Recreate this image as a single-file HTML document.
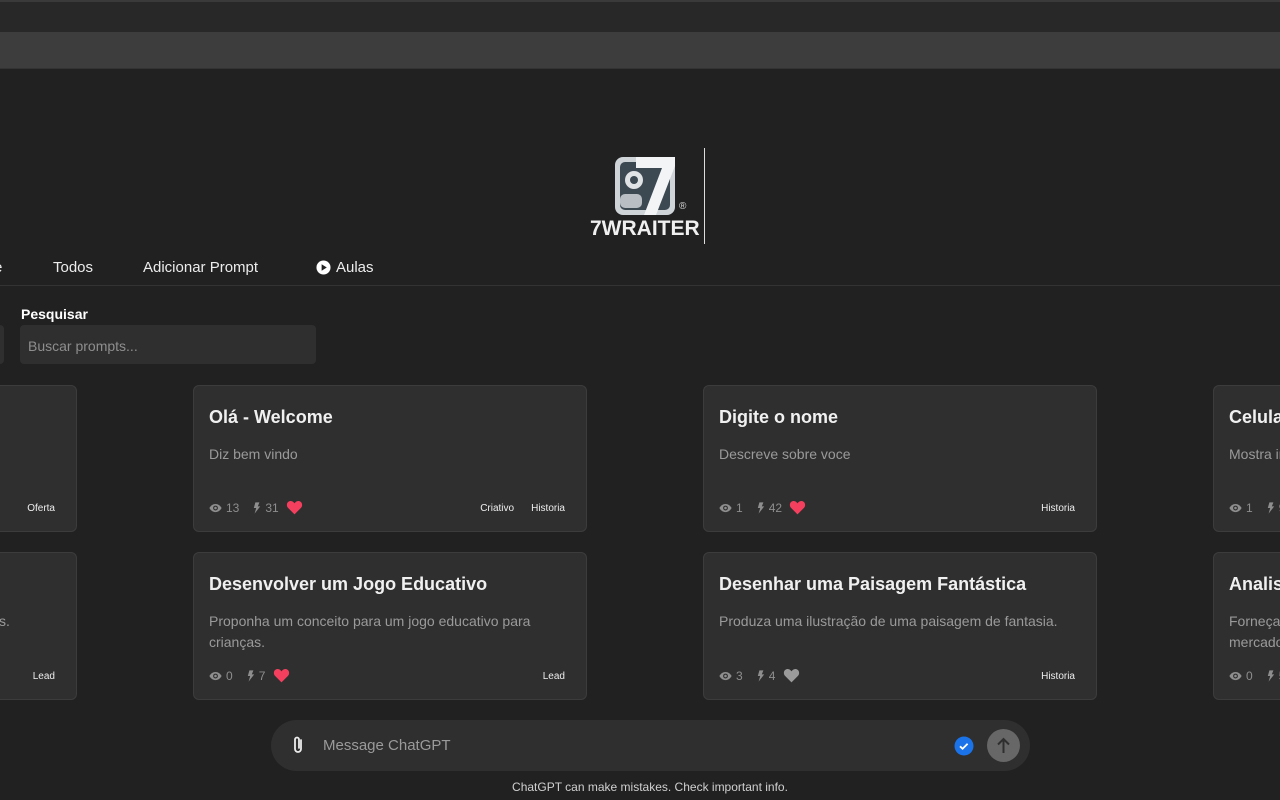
<!DOCTYPE html>
<html><head><meta charset="utf-8"><style>
*{box-sizing:border-box;margin:0;padding:0}
html,body{width:1280px;height:800px;overflow:hidden;background:#212121}
body{font-family:"Liberation Sans",sans-serif;color:#ececec}
#wrap{position:relative;width:1280px;height:800px;overflow:hidden}
.bar1{position:absolute;left:0;top:0;width:1280px;height:32px;background:#282828;border-top:2px solid #3a3a3a}
.bar2{position:absolute;left:0;top:32px;width:1280px;height:37px;background:#3d3d3d;border-bottom:1px solid #333}
.nav{position:absolute;top:259px;font-size:15px;color:#ececec}
.hr{position:absolute;left:0;top:285px;width:1280px;height:1px;background:#333}
.card{position:absolute;width:394px;background:#2f2f2f;border:1px solid #3c3c3c;border-radius:6px;overflow:hidden}
.card h3{position:absolute;left:15px;top:21px;font-size:18px;font-weight:bold;color:#f0f0f0;white-space:nowrap}
.card p{position:absolute;left:15px;top:58px;font-size:14px;line-height:21px;color:#9a9a9a;width:360px}
.st{position:absolute;left:15px;bottom:16px;font-size:12px;color:#8e8e8e;display:flex;align-items:center;gap:4px;white-space:nowrap}
.tags{position:absolute;right:21px;bottom:17px;font-size:10px;color:#eee;display:flex;gap:17px}
</style></head><body><div id="wrap">
<div class="bar1"></div><div class="bar2"></div>

<svg style="position:absolute;left:612px;top:154px" width="66" height="62" viewBox="0 0 66 62">
<rect x="3" y="3" width="60" height="58" rx="8" fill="#cfd4d8"/>
<rect x="8" y="8" width="50" height="48" rx="5" fill="#3c4852"/>
<circle cx="22" cy="26" r="9" fill="#dfe3e6"/><circle cx="22" cy="26" r="4" fill="#3c4852"/>
<rect x="8" y="40" width="22" height="14" rx="5" fill="#b8bec3"/>
<path d="M24 3 H63 V12 L44 61 H32 L50 14 H24 Z" fill="#f2f4f5"/>
</svg>
<div style="position:absolute;left:679px;top:201px;font-size:10px;color:#ddd">®</div>
<div style="position:absolute;left:590px;top:217px;font-size:21px;font-weight:bold;color:#f0f0f0">7WRAITER</div>
<div style="position:absolute;left:704px;top:148px;width:1px;height:96px;background:#ddd"></div>

<div class="nav" style="left:-6px">e</div>
<div class="nav" style="left:53px">Todos</div>
<div class="nav" style="left:143px">Adicionar Prompt</div>
<div class="nav" style="left:316px;display:flex;align-items:center;gap:5px"><svg width="15" height="15" viewBox="0 0 16 16"><circle cx="8" cy="8" r="7.5" fill="#fff"/><path d="M6 4.5 L11.5 8 L6 11.5Z" fill="#212121"/></svg>Aulas</div>
<div class="hr"></div>

<div style="position:absolute;left:21px;top:306px;font-size:14px;font-weight:bold;color:#fff">Pesquisar</div>
<div style="position:absolute;left:0;top:325px;width:4px;height:39px;background:#2f2f2f;border-radius:0 4px 4px 0"></div>
<div style="position:absolute;left:20px;top:325px;width:296px;height:39px;background:#2f2f2f;border-radius:4px;font-size:14px;color:#8e8e8e;padding:13px 8px">Buscar prompts...</div>

<svg width="0" height="0" style="position:absolute"><defs>
<symbol id="eye" viewBox="0 0 16 12"><path d="M8 1C4 1 1.5 4 .5 6c1 2 3.5 5 7.5 5s6.5-3 7.5-5C14.5 4 12 1 8 1z" fill="#8e8e8e"/><circle cx="8" cy="6" r="3" fill="#2f2f2f"/><circle cx="8" cy="6" r="1.6" fill="#8e8e8e"/></symbol>
<symbol id="bolt" viewBox="0 0 10 14"><path d="M3 0h5L6 5h3L2 14l2-7H1z" fill="#8e8e8e"/></symbol>
<symbol id="heart" viewBox="0 0 24 22"><path d="M12 21L2.5 11.5C-.5 8.5.5 2 6 1.5c3-.2 5 2 6 3.5 1-1.5 3-3.7 6-3.5 5.5.5 6.5 7 3.5 10z"/></symbol>
</defs></svg>

<div class="card" style="left:-317px;top:385px;height:147px"><div class="tags"><span>Oferta</span></div></div>
<div class="card" style="left:193px;top:385px;height:147px"><h3>Olá - Welcome</h3><p>Diz bem vindo</p>
<div class="st"><svg width="13" height="10"><use href="#eye"/></svg>13&nbsp;&nbsp;&nbsp;<svg width="8" height="12"><use href="#bolt"/></svg>31&nbsp;<svg width="17" height="15" fill="#f43f5e"><use href="#heart"/></svg></div>
<div class="tags"><span>Criativo</span><span>Historia</span></div></div>
<div class="card" style="left:703px;top:385px;height:147px"><h3>Digite o nome</h3><p>Descreve sobre voce</p>
<div class="st"><svg width="13" height="10"><use href="#eye"/></svg>1&nbsp;&nbsp;&nbsp;<svg width="8" height="12"><use href="#bolt"/></svg>42&nbsp;<svg width="17" height="15" fill="#f43f5e"><use href="#heart"/></svg></div>
<div class="tags"><span>Historia</span></div></div>
<div class="card" style="left:1213px;top:385px;height:147px"><h3>Celular</h3><p>Mostra informações</p>
<div class="st"><svg width="13" height="10"><use href="#eye"/></svg>1&nbsp;&nbsp;&nbsp;<svg width="8" height="12"><use href="#bolt"/></svg>9</div></div>

<div class="card" style="left:-317px;top:552px;height:148px"><p style="left:315px;top:58px">s.</p><div class="tags"><span>Lead</span></div></div>
<div class="card" style="left:193px;top:552px;height:148px"><h3>Desenvolver um Jogo Educativo</h3><p>Proponha um conceito para um jogo educativo para crianças.</p>
<div class="st"><svg width="13" height="10"><use href="#eye"/></svg>0&nbsp;&nbsp;&nbsp;<svg width="8" height="12"><use href="#bolt"/></svg>7&nbsp;<svg width="17" height="15" fill="#f43f5e"><use href="#heart"/></svg></div>
<div class="tags"><span>Lead</span></div></div>
<div class="card" style="left:703px;top:552px;height:148px"><h3>Desenhar uma Paisagem Fantástica</h3><p>Produza uma ilustração de uma paisagem de fantasia.</p>
<div class="st"><svg width="13" height="10"><use href="#eye"/></svg>3&nbsp;&nbsp;&nbsp;<svg width="8" height="12"><use href="#bolt"/></svg>4&nbsp;<svg width="17" height="15" fill="#9a9a9a"><use href="#heart"/></svg></div>
<div class="tags"><span>Historia</span></div></div>
<div class="card" style="left:1213px;top:552px;height:148px"><h3>Analisar</h3><p>Forneça uma<br>mercado</p>
<div class="st"><svg width="13" height="10"><use href="#eye"/></svg>0&nbsp;&nbsp;&nbsp;<svg width="8" height="12"><use href="#bolt"/></svg>5</div></div>

<div style="position:absolute;left:271px;top:720px;width:759px;height:51px;background:#2f2f2f;border-radius:26px"></div>
<svg style="position:absolute;left:290px;top:735px" width="16" height="21" viewBox="0 0 16 21"><path d="M11 5v9a3 3 0 0 1-6 0V4.5a2 2 0 0 1 4 0V13" fill="none" stroke="#ececec" stroke-width="1.8" stroke-linecap="round"/></svg>
<div style="position:absolute;left:323px;top:737px;font-size:15px;color:#9a9a9a">Message ChatGPT</div>
<svg style="position:absolute;left:954px;top:736px" width="20" height="20"><circle cx="10" cy="10" r="9.5" fill="#1a73e8"/><path d="M6 10.3l2.6 2.5 5-5" fill="none" stroke="#fff" stroke-width="1.8"/></svg>
<svg style="position:absolute;left:987px;top:729px" width="33" height="33"><circle cx="16.5" cy="16.5" r="16.5" fill="#676767"/><path d="M16.5 24V10M11 15.5l5.5-5.5 5.5 5.5" fill="none" stroke="#2f2f2f" stroke-width="2"/></svg>
<div style="position:absolute;left:20px;width:1260px;top:780px;text-align:center;font-size:12px;color:#d0d0d0">ChatGPT can make mistakes. Check important info.</div>
</div></body></html>
